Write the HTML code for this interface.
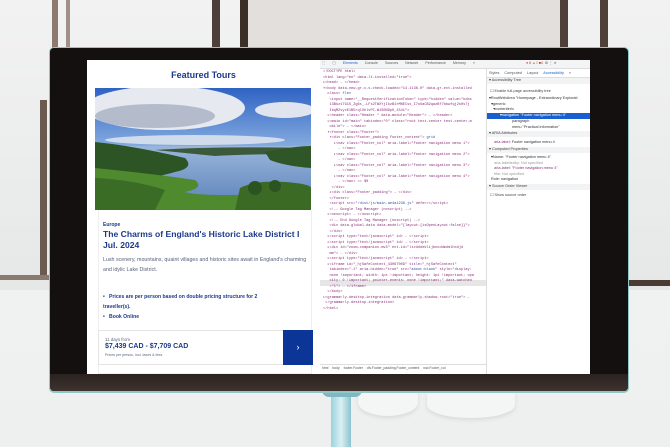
<!DOCTYPE html>
<html><head><style>
*{margin:0;padding:0;box-sizing:border-box}
body{width:670px;height:447px;overflow:hidden;background:#eceeee;position:relative;font-family:"Liberation Sans",sans-serif}
.a{position:absolute}
.code{font-family:"Liberation Mono",monospace;font-size:3.6px;line-height:5.5px;color:#8a2f7a;white-space:nowrap}
.code span.b{color:#2a4ea8}
.rp{font-size:3.8px;line-height:5.6px;color:#444;white-space:nowrap}
</style></head><body>
<div class="a" style="left:0;top:0;width:670px;height:290px;background:linear-gradient(#f2f2f2,#e6e8e8)"></div>
<div class="a" style="left:52px;top:0;width:6px;height:50px;background:#8c7a70"></div>
<div class="a" style="left:66px;top:0;width:4px;height:50px;background:#a09088"></div>
<div class="a" style="left:212px;top:0;width:8px;height:50px;background:#4e3f38"></div>
<div class="a" style="left:240px;top:0;width:8px;height:50px;background:#3c2f2a"></div>
<div class="a" style="left:560px;top:0;width:8px;height:50px;background:#4e3f38"></div>
<div class="a" style="left:600px;top:0;width:8px;height:50px;background:#4e3f38"></div>
<div class="a" style="left:248px;top:0;width:312px;height:50px;background:#e2dfdc"></div>
<div class="a" style="left:40px;top:100px;width:7px;height:175px;background:#6a5a50"></div>
<div class="a" style="left:628px;top:280px;width:42px;height:6px;background:#4a3b34"></div>
<div class="a" style="left:0;top:275px;width:50px;height:5px;background:#8a7a70"></div>
<div class="a" style="left:0;top:290px;width:670px;height:157px;background:linear-gradient(#f0f1f1,#eef0f0)"></div>
<div class="a" style="left:358px;top:388px;width:60px;height:28px;border-radius:0 0 50% 50%;background:#f4f5f5;box-shadow:0 2px 4px #d8dada"></div>
<div class="a" style="left:427px;top:392px;width:88px;height:26px;border-radius:0 0 50% 50%;background:#f4f5f5;box-shadow:0 2px 4px #d8dada"></div>
<div class="a" style="left:331px;top:392px;width:20px;height:55px;background:linear-gradient(90deg,#9dd1dc,#d9f0f4,#8cc4cf)"></div>
<div class="a" style="left:322px;top:390px;width:40px;height:7px;background:#7fb8c2;border-radius:0 0 8px 8px"></div>
<div class="a" style="left:49px;top:47px;width:580px;height:346px;border-radius:5px;background:#8fc6c8"></div>
<div class="a" style="left:50px;top:48px;width:578px;height:343px;border-radius:4px;background:#141010"></div>
<div class="a" style="left:50px;top:374px;width:578px;height:17px;border-radius:0 0 4px 4px;background:linear-gradient(#2a2220,#3e322c)"></div>
<div class="a" style="left:87px;top:60px;width:233px;height:314px;background:#fff"></div>
<div class="a" style="left:87px;top:70px;width:233px;text-align:center;font-size:9px;font-weight:bold;color:#1b3a8a">Featured Tours</div>
<svg class="a" style="left:95px;top:88px" width="216" height="122" viewBox="0 0 216 122">
<defs><linearGradient id="s" x1="0" y1="0" x2="0" y2="1"><stop offset="0" stop-color="#2f63c4"/><stop offset="1" stop-color="#8ab0e0"/></linearGradient>
<linearGradient id="w" x1="0" y1="0" x2="0" y2="1"><stop offset="0" stop-color="#9ab6dc"/><stop offset="1" stop-color="#5a80b8"/></linearGradient></defs>
<rect width="216" height="62" fill="url(#s)"/>
<ellipse cx="70" cy="20" rx="80" ry="22" fill="#e6e9f0"/>
<ellipse cx="60" cy="28" rx="60" ry="12" fill="#b4bccb"/>
<ellipse cx="190" cy="22" rx="30" ry="8" fill="#dfe4ee"/>
<ellipse cx="100" cy="52" rx="90" ry="5" fill="#d0dcec"/>
<rect y="58" width="216" height="64" fill="url(#w)"/>
<path d="M0 54 Q40 58 90 70 Q100 80 80 84 Q60 90 0 100Z" fill="#2c5424"/>
<path d="M60 62 Q120 58 216 60 L216 66 Q150 66 120 68Z" fill="#3c5a3a"/>
<path d="M170 64 Q200 58 216 58 L216 80 Q190 78 175 72Z" fill="#2e5626"/>
<path d="M0 80 Q60 86 100 92 Q110 100 90 104 Q110 110 216 104 L216 122 L0 122Z" fill="#4f8a2e"/>
<path d="M0 90 Q40 92 70 102 L60 122 L0 122Z" fill="#3a6c26"/>
<path d="M145 100 Q160 92 190 94 Q216 96 216 100 L216 122 L140 122Z" fill="#3a6a24"/>
<circle cx="160" cy="100" r="7" fill="#2c5420"/><circle cx="180" cy="98" r="6" fill="#2c5420"/>
</svg>
<div class="a" style="left:98px;top:210px;width:214px;height:164px;border:1px solid #eee;border-top:none"></div>
<div class="a" style="left:103px;top:222px;font-size:5px;font-weight:bold;color:#1b3a8a">Europe</div>
<div class="a" style="left:103px;top:229px;width:210px;font-size:8.6px;line-height:11px;font-weight:bold;color:#1b3a8a">The Charms of England's Historic Lake District I Jul. 2024</div>
<div class="a" style="left:103px;top:255px;width:208px;font-size:5.3px;line-height:10px;color:#56607a">Lush scenery, mountains, quaint villages and historic sites await in England's charming and idylic Lake District.</div>
<div class="a" style="left:103px;top:292px;width:175px;font-size:5.1px;line-height:10px;font-weight:bold;color:#1b3a8a">•&nbsp;&nbsp;&nbsp;Prices are per person based on double pricing structure for 2 traveller(s).<br>•&nbsp;&nbsp;&nbsp;Book Online</div>
<div class="a" style="left:98px;top:330px;width:215px;height:35px;border:1px solid #e4e4e4;background:#fff"></div>
<div class="a" style="left:105px;top:337px;font-size:4.4px;color:#5a6480">11 days from</div>
<div class="a" style="left:105px;top:343px;font-size:7px;font-weight:bold;color:#1b3a8a">$7,439 CAD - $7,709 CAD</div>
<div class="a" style="left:105px;top:353px;font-size:3.6px;color:#5a6480">Prices per person, incl. taxes &amp; fees</div>
<div class="a" style="left:283px;top:330px;width:30px;height:35px;background:#0b3596;color:#fff;font-size:9px;text-align:center;line-height:35px">›</div>
<div class="a" style="left:320px;top:60px;width:270px;height:314px;background:#fff"></div>
<div class="a" style="left:320px;top:60px;width:270px;height:9px;background:#f3f4f6;border-bottom:1px solid #ddd"></div>
<div class="a rp" style="left:322px;top:61px;font-size:3.6px;color:#555;word-spacing:6px">⬚ ▢ <span style="color:#1a5fd0">Elements</span> Console Sources Network Performance Memory »</div>
<div class="a rp" style="left:526px;top:61px;font-size:3.6px;color:#c33">● 6 <span style="color:#c90">▲3</span> ■4 &nbsp;<span style="color:#555">⚙ ⋮ ✕</span></div>
<div class="a" style="left:486px;top:69px;width:1px;height:305px;background:#ddd"></div>
<div class="a" style="left:320px;top:280px;width:166px;height:5.5px;background:#e6e6e6"></div>
<div class="a code" style="left:323px;top:70px">
&lt;!DOCTYPE html&gt;<br>
&lt;html lang="en" data-lt-installed="true"&gt;<br>
▸&lt;head&gt; … &lt;/head&gt;<br>
▾&lt;body data-new-gr-c-s-check-loaded="14.1136.0" data-gr-ext-installed<br>
&nbsp;&nbsp;class&gt; <span class="b">flex</span><br>
&nbsp;&nbsp;&nbsp;&lt;input name="__RequestVerificationToken" type="hidden" value="kdbs<br>
&nbsp;&nbsp;&nbsp;13Bkz17G1S_Zg6s_-LFs2TWXYjIkzB1rMNECss_I7oUaCB2qazBf7bbwfqj2k0s7j<br>
&nbsp;&nbsp;&nbsp;IbqMZvyxE1B5rqlUhlvPC-W1S0N9p0_1541"&gt;<br>
&nbsp;&nbsp;▸&lt;header class="Header " data-module="Header"&gt; … &lt;/header&gt;<br>
&nbsp;&nbsp;▸&lt;main id="main" tabindex="0" class="root text-center test-center-m<br>
&nbsp;&nbsp;&nbsp;obile"&gt; … &lt;/main&gt;<br>
&nbsp;&nbsp;▾&lt;footer class="Footer"&gt;<br>
&nbsp;&nbsp;&nbsp;▾&lt;div class="Footer_padding Footer_content"&gt; <span class="b">grid</span><br>
&nbsp;&nbsp;&nbsp;&nbsp;&nbsp;▸&lt;nav class="Footer_col" aria-label="Footer navigation menu 1"&gt;<br>
&nbsp;&nbsp;&nbsp;&nbsp;&nbsp;&nbsp;&nbsp;… &lt;/nav&gt;<br>
&nbsp;&nbsp;&nbsp;&nbsp;&nbsp;▸&lt;nav class="Footer_col" aria-label="Footer navigation menu 2"&gt;<br>
&nbsp;&nbsp;&nbsp;&nbsp;&nbsp;&nbsp;&nbsp;… &lt;/nav&gt;<br>
&nbsp;&nbsp;&nbsp;&nbsp;&nbsp;▸&lt;nav class="Footer_col" aria-label="Footer navigation menu 3"&gt;<br>
&nbsp;&nbsp;&nbsp;&nbsp;&nbsp;&nbsp;&nbsp;… &lt;/nav&gt;<br>
&nbsp;&nbsp;&nbsp;&nbsp;&nbsp;▸&lt;nav class="Footer_col" aria-label="Footer navigation menu 4"&gt;<br>
&nbsp;&nbsp;&nbsp;&nbsp;&nbsp;&nbsp;&nbsp;… &lt;/nav&gt; == $0<br>
&nbsp;&nbsp;&nbsp;&nbsp;&lt;/div&gt;<br>
&nbsp;&nbsp;&nbsp;▸&lt;div class="Footer_padding"&gt; … &lt;/div&gt;<br>
&nbsp;&nbsp;&nbsp;&lt;/footer&gt;<br>
&nbsp;&nbsp;&nbsp;&lt;script src="<span class="b">/dist/js/main.ae4a1238.js</span>" defer&gt;&lt;/script&gt;<br>
&nbsp;&nbsp;&nbsp;&lt;!-- Google Tag Manager (noscript) --&gt;<br>
&nbsp;&nbsp;▸&lt;noscript&gt; … &lt;/noscript&gt;<br>
&nbsp;&nbsp;&nbsp;&lt;!-- End Google Tag Manager (noscript) --&gt;<br>
&nbsp;&nbsp;&nbsp;&lt;div data-global-data data-model="{layout:{isOpenLayout:false}}"&gt;<br>
&nbsp;&nbsp;&nbsp;&lt;/div&gt;<br>
&nbsp;&nbsp;▸&lt;script type="text/javascript" id&gt; … &lt;/script&gt;<br>
&nbsp;&nbsp;▸&lt;script type="text/javascript" id&gt; … &lt;/script&gt;<br>
&nbsp;&nbsp;▸&lt;div id="zoom-companion-mv3" ext-id="licdddeklijbnoddmdmlhodjd<br>
&nbsp;&nbsp;&nbsp;mm"&gt; … &lt;/div&gt;<br>
&nbsp;&nbsp;▸&lt;script type="text/javascript" id&gt; … &lt;/script&gt;<br>
&nbsp;&nbsp;▸&lt;iframe id="_hjSafeContext_43067009" title="_hjSafeContext"<br>
&nbsp;&nbsp;&nbsp;tabindex="-1" aria-hidden="true" src="<span class="b">about:blank</span>" style="display:<br>
&nbsp;&nbsp;&nbsp;none !important; width: 1px !important; height: 1px !important; opa<br>
&nbsp;&nbsp;&nbsp;city: 0 !important; pointer-events: none !important;" data-watched<br>
&nbsp;&nbsp;&nbsp;="1"&gt; … &lt;/iframe&gt;<br>
&nbsp;&nbsp;&lt;/body&gt;<br>
▸&lt;grammarly-desktop-integration data-grammarly-shadow-root="true"&gt; …<br>
&nbsp;&lt;/grammarly-desktop-integration&gt;<br>
&lt;/html&gt;
</div>
<div class="a rp" style="left:322px;top:366px;font-size:3.4px;color:#555;word-spacing:3px">html body footer.Footer div.Footer_padding.Footer_content nav.Footer_col</div>
<div class="a" style="left:320px;top:364px;width:166px;height:1px;background:#ddd"></div>
<div class="a rp" style="left:489px;top:71px;color:#555;word-spacing:4px">Styles Computed Layout <span style="color:#1a5fd0">Accessibility</span> »</div>
<div class="a" style="left:487px;top:77px;width:103px;height:1px;background:#ddd"></div>
<div class="a" style="left:487px;top:78px;width:103px;height:6px;background:#f2f3f5"></div>
<div class="a rp" style="left:489px;top:78px">▾ Accessibility Tree</div>
<div class="a rp" style="left:490px;top:89px">☐ Enable full-page accessibility tree</div>
<div class="a rp" style="left:489px;top:96px;color:#333">▾RootWebArea "Homepage - Extraordinary Explorati<br>&nbsp;&nbsp;▾generic<br>&nbsp;&nbsp;&nbsp;&nbsp;▾contentinfo</div>
<div class="a" style="left:487px;top:113px;width:103px;height:6px;background:#1a5fd0"></div>
<div class="a rp" style="left:500px;top:113px;color:#fff">▾navigation "Footer navigation menu 4"</div>
<div class="a rp" style="left:512px;top:119px;color:#333">paragraph<br>menu "Practical information"</div>
<div class="a" style="left:487px;top:131px;width:103px;height:6px;background:#f2f3f5"></div>
<div class="a rp" style="left:489px;top:131px">▾ ARIA Attributes</div>
<div class="a rp" style="left:494px;top:140px;color:#8a2f7a">aria-label: <span style="color:#333">Footer navigation menu 4</span></div>
<div class="a" style="left:487px;top:147px;width:103px;height:6px;background:#f2f3f5"></div>
<div class="a rp" style="left:489px;top:147px">▾ Computed Properties</div>
<div class="a rp" style="left:491px;top:155px;color:#333">▾Name: "Footer navigation menu 4"<br><span style="color:#999">&nbsp;&nbsp;&nbsp;aria-labelledby: Not specified</span><br><span style="color:#8a2f7a">&nbsp;&nbsp;&nbsp;aria-label: "Footer navigation menu 4"</span><br><span style="color:#999">&nbsp;&nbsp;&nbsp;title: Not specified</span><br>Role: navigation</div>
<div class="a" style="left:487px;top:184px;width:103px;height:6px;background:#f2f3f5"></div>
<div class="a rp" style="left:489px;top:184px">▾ Source Order Viewer</div>
<div class="a rp" style="left:490px;top:193px">☐ Show source order</div>
</body></html>
